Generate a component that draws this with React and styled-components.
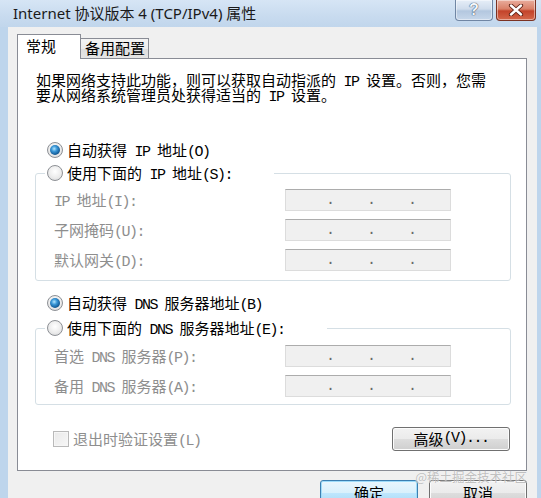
import React from "react";
import styled, { createGlobalStyle } from "styled-components";

const GlobalStyle = createGlobalStyle`
  html, body {
    margin: 0;
    padding: 0;
    background: #f0f0f0;
  }
  body {
    width: 541px;
    height: 498px;
    overflow: hidden;
  }
`;

// SimSun draws ASCII at half width; Courier squeezed to 7.5px gives the same rhythm
const mixed = (text) =>
  text
    .split(/([\x20-\x7e]+)/)
    .filter(Boolean)
    .map((part, i) =>
      /^[\x20-\x7e]+$/.test(part) ? <Latin key={i}>{part}</Latin> : part
    );

const App = () => {
  return (
    <Window>
      <GlobalStyle />
      <TitleBar>
        <Title>Internet 协议版本 4 (TCP/IPv4) 属性</Title>
        <CaptionButtons>
          <CaptionButton $w={38}>
            <HelpGlyph>?</HelpGlyph>
          </CaptionButton>
          <CaptionButton $w={40} $close>
            <svg width="16" height="12" viewBox="0 0 16 12">
              <path d="M3 1.5 L13 10.5 M13 1.5 L3 10.5" stroke="#5a1e12" strokeWidth="4.2" strokeLinecap="round" />
              <path d="M3 1.5 L13 10.5 M13 1.5 L3 10.5" stroke="#fff" strokeWidth="2.4" strokeLinecap="round" />
            </svg>
          </CaptionButton>
        </CaptionButtons>
      </TitleBar>

      <Frame>
        <TabBar>
          <Tab $active $w={64} $pad={8}>常规</Tab>
          <Tab $w={69} $pad={4}>备用配置</Tab>
        </TabBar>

        <Panel>
          <Description>
            <Line>{mixed("如果网络支持此功能，则可以获取自动指派的 IP 设置。否则，您需")}</Line>
            <Line>{mixed("要从网络系统管理员处获得适当的 IP 设置。")}</Line>
          </Description>

          <RadioRow $top={38}>
            <Radio $checked />
            <span>{mixed("自动获得 IP 地址(O)")}</span>
          </RadioRow>

          <Group $top={3}>
            <Legend $gap={42}>
              <Radio />
              <span>{mixed("使用下面的 IP 地址(S):")}</span>
            </Legend>
            <GroupBody $pt={6} $pb={9}>
              <FieldLabel>{mixed("IP 地址(I):")}</FieldLabel>
              <IpField><Dot>.</Dot><Dot>.</Dot><Dot>.</Dot></IpField>
              <FieldLabel>{mixed("子网掩码(U):")}</FieldLabel>
              <IpField><Dot>.</Dot><Dot>.</Dot><Dot>.</Dot></IpField>
              <FieldLabel>{mixed("默认网关(D):")}</FieldLabel>
              <IpField><Dot>.</Dot><Dot>.</Dot><Dot>.</Dot></IpField>
            </GroupBody>
          </Group>

          <RadioRow $top={12}>
            <Radio $checked />
            <span>{mixed("自动获得 DNS 服务器地址(B)")}</span>
          </RadioRow>

          <Group $top={5}>
            <Legend $gap={42}>
              <Radio />
              <span>{mixed("使用下面的 DNS 服务器地址(E):")}</span>
            </Legend>
            <GroupBody $pt={7} $pb={7}>
              <FieldLabel>{mixed("首选 DNS 服务器(P):")}</FieldLabel>
              <IpField><Dot>.</Dot><Dot>.</Dot><Dot>.</Dot></IpField>
              <FieldLabel>{mixed("备用 DNS 服务器(A):")}</FieldLabel>
              <IpField><Dot>.</Dot><Dot>.</Dot><Dot>.</Dot></IpField>
            </GroupBody>
          </Group>

          <CheckRow>
            <CheckLabel>
              <CheckBox />
              <span>{mixed("退出时验证设置(L)")}</span>
            </CheckLabel>
            <WinButton $w={118} $h={24}>{mixed("高级(V)...")}</WinButton>
          </CheckRow>
        </Panel>

        <Footer>
          <WinButton $w={98} $h={26} $default>确定</WinButton>
          <WinButton $w={98} $h={26}>取消</WinButton>
        </Footer>
      </Frame>

      <Watermark>@稀土掘金技术社区</Watermark>
    </Window>
  );
};

const Window = styled.div`
  position: relative;
  width: 541px;
  height: 498px;
  display: flex;
  flex-direction: column;
  overflow: hidden;
  background: #bed5ec;
  font-family: "Noto Sans CJK SC", sans-serif;
  font-size: 15px;
  color: #000;
`;

const Latin = styled.span`
  font-family: "Liberation Mono", monospace;
  font-size: 15px;
  line-height: 0;
  letter-spacing: -1.5px;
`;

const TitleBar = styled.div`
  flex: none;
  height: 27px;
  display: flex;
  align-items: flex-start;
  padding-left: 13px;
  background: linear-gradient(180deg, #d6e5f5 0%, #c8dbef 60%, #c1d6ec 100%);
`;

const Title = styled.div`
  font-family: "Noto Sans", "Noto Sans CJK SC", sans-serif;
  font-size: 15px;
  line-height: 26px;
  color: #1a1a1a;
`;

const CaptionButtons = styled.div`
  display: flex;
  gap: 3px;
  margin-left: auto;
  margin-right: 5px;
`;

const CaptionButton = styled.div`
  box-sizing: border-box;
  width: ${(p) => p.$w}px;
  height: 21px;
  display: flex;
  align-items: center;
  justify-content: center;
  border: 1px solid ${(p) => (p.$close ? "#7b3223" : "#7086a4")};
  border-top: none;
  border-radius: 0 0 4px 4px;
  background: ${(p) =>
    p.$close
      ? "linear-gradient(180deg, #e9ad9d 0%, #d98068 45%, #c3432a 55%, #d4674a 100%)"
      : "linear-gradient(180deg, #e6eef8 0%, #cfdcec 45%, #b3c7df 55%, #c7d7ea 100%)"};
  box-shadow: inset 0 0 0 1px rgba(255, 255, 255, 0.45);
`;

const HelpGlyph = styled.span`
  font-family: "Liberation Sans", sans-serif;
  font-weight: bold;
  font-size: 16px;
  line-height: 18px;
  color: #f4f7fb;
  text-shadow: 0 0 1px #2d405c, 0 0 1px #2d405c;
`;

const Frame = styled.div`
  flex: 1;
  display: flex;
  flex-direction: column;
  margin: 0 4px 0 8px;
  padding: 7px 10px 0 9px;
  background: #f0f0f0;
`;

const TabBar = styled.div`
  position: relative;
  z-index: 1;
  display: flex;
  align-items: flex-end;
  height: 25px;
  margin-bottom: -1px;
`;

const Tab = styled.div`
  position: relative;
  z-index: ${(p) => (p.$active ? 2 : 1)};
  box-sizing: border-box;
  width: ${(p) => p.$w}px;
  height: ${(p) => (p.$active ? 25 : 21)}px;
  margin-left: ${(p) => (p.$active ? 0 : -1)}px;
  padding-left: ${(p) => p.$pad}px;
  border: 1px solid #898c95;
  border-bottom: ${(p) => (p.$active ? "none" : "1px solid #898c95")};
  background: ${(p) =>
    p.$active
      ? "#fff"
      : "linear-gradient(180deg, #f4f4f4 0%, #ececec 50%, #dedede 51%, #e5e5e5 100%)"};
  line-height: ${(p) => (p.$active ? 22 : 18)}px;
  font-size: 15px;
`;

const Panel = styled.div`
  box-sizing: border-box;
  height: 413px;
  display: flex;
  flex-direction: column;
  padding: 13px 15px 0 17px;
  border: 1px solid #898c95;
  background: #fff;
`;

const Description = styled.div`
  display: flex;
  flex-direction: column;
  margin-left: 1px;
`;

const Line = styled.div`
  height: 15px;
  line-height: 15px;
  white-space: nowrap;
`;

const RadioRow = styled.div`
  display: flex;
  align-items: center;
  gap: 4px;
  height: 20px;
  margin-top: ${(p) => p.$top}px;
  padding-left: 12px;
  line-height: 20px;
`;

const Radio = styled.span`
  position: relative;
  flex: none;
  box-sizing: border-box;
  width: 16px;
  height: 16px;
  border: 1px solid #8d9095;
  border-radius: 50%;
  background: radial-gradient(circle at 50% 40%, #ffffff 0%, #ececec 55%, #d2d3d5 100%);

  &::after {
    content: "";
    display: ${(p) => (p.$checked ? "block" : "none")};
    position: absolute;
    left: 2px;
    top: 2px;
    width: 10px;
    height: 10px;
    border-radius: 50%;
    background: radial-gradient(circle at 42% 38%, #b4e6ff 0%, #3b98d8 32%, #16609c 65%, #0c3a66 100%);
  }
`;

const Group = styled.fieldset`
  margin: ${(p) => p.$top}px 0 0 0;
  padding: 0;
  min-width: 0;
  border: 1px solid #d5dfe5;
  border-radius: 3px;
`;

const Legend = styled.legend`
  display: flex;
  align-items: center;
  gap: 4px;
  height: 20px;
  margin-left: 9px;
  padding: 0 ${(p) => p.$gap}px 0 2px;
  line-height: 20px;
`;

const GroupBody = styled.div`
  display: grid;
  grid-template-columns: 231px 166px;
  grid-auto-rows: 22px;
  row-gap: 8px;
  align-items: center;
  padding: ${(p) => p.$pt}px 0 ${(p) => p.$pb}px 18px;
`;

const FieldLabel = styled.span`
  color: #8e8e8e;
  line-height: 22px;
  white-space: nowrap;
`;

const IpField = styled.div`
  box-sizing: border-box;
  height: 22px;
  display: flex;
  padding: 2px 0 0 40px;
  border: 1px solid #dcdcdc;
  border-top-color: #acacac;
  background: #f0f0f0;
`;

const Dot = styled.span`
  flex: none;
  width: 41px;
  font-family: "Liberation Mono", monospace;
  font-size: 15px;
  line-height: 18px;
  color: #6a6a6a;
`;

const CheckRow = styled.div`
  display: flex;
  align-items: center;
  justify-content: space-between;
  height: 24px;
  margin: 22px 1px 0 0;
  padding-left: 18px;
`;

const CheckLabel = styled.div`
  display: flex;
  align-items: center;
  gap: 4px;
  color: #8e8e8e;
  line-height: 20px;
`;

const CheckBox = styled.span`
  box-sizing: border-box;
  width: 16px;
  height: 16px;
  border: 1px solid #b9b9b9;
  background: linear-gradient(135deg, #e9e9e9 0%, #f7f7f7 100%);
  box-shadow: inset 0 0 0 1px #f6f6f6;
`;

const WinButton = styled.div`
  box-sizing: border-box;
  width: ${(p) => p.$w}px;
  height: ${(p) => p.$h}px;
  display: flex;
  align-items: center;
  justify-content: center;
  border: 1px solid ${(p) => (p.$default ? "#3c7fb1" : "#707070")};
  border-radius: 3px;
  background: ${(p) =>
    p.$default
      ? "linear-gradient(180deg, #eaf6fd 0%, #d9f0fc 50%, #bee6fd 51%, #a7d9f5 100%)"
      : "linear-gradient(180deg, #f2f2f2 0%, #ebebeb 50%, #dddddd 51%, #cfcfcf 100%)"};
  box-shadow: inset 0 0 0 1px ${(p) => (p.$default ? "#9fdcfa" : "#fcfcfc")};
  font-size: 15px;
  line-height: 20px;
`;

const Footer = styled.div`
  display: flex;
  justify-content: flex-end;
  gap: 11px;
  margin-top: 9px;
`;

const Watermark = styled.div`
  position: absolute;
  right: 14px;
  top: 469px;
  font-size: 12.5px;
  line-height: 16px;
  color: rgba(140, 140, 140, 0.55);
  text-shadow: 0 0 1px #fff;
`;

export default App;
